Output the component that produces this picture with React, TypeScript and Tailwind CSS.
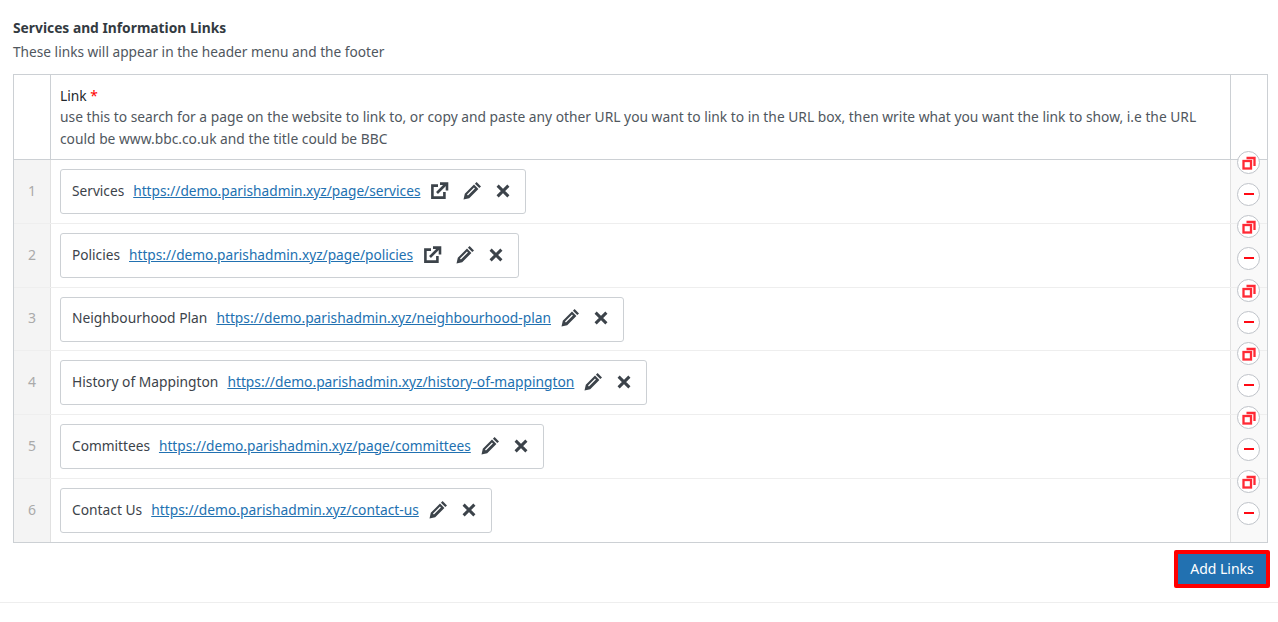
const links = [
  { title: "Services", url: "https://demo.parishadmin.xyz/page/services", external: true, height: "h-[64px]", size: "text-[13.7px]" },
  { title: "Policies", url: "https://demo.parishadmin.xyz/page/policies", external: true, height: "h-[64px]", size: "text-[13.7px]" },
  { title: "Neighbourhood Plan", url: "https://demo.parishadmin.xyz/neighbourhood-plan", external: false, height: "h-[63px]", size: "text-[13.8px]" },
  { title: "History of Mappington", url: "https://demo.parishadmin.xyz/history-of-mappington", external: false, height: "h-[64px]", size: "text-[13.8px]" },
  { title: "Committees", url: "https://demo.parishadmin.xyz/page/committees", external: false, height: "h-[64px]", size: "text-[13.7px]" },
  { title: "Contact Us", url: "https://demo.parishadmin.xyz/contact-us", external: false, height: "h-[63px]", size: "text-[13.8px]" },
];

function ExternalIcon() {
  return (
    <svg className="mr-[2px] h-[20px] w-[20px] shrink-0" viewBox="0 0 20 20" fill="none" stroke="#3c434a" strokeWidth="2.6">
      <path d="M9 4.6H3.4v12h12V11" />
      <path d="M8 12l8.5-8.5" />
      <path d="M11 2.6h7v7" />
    </svg>
  );
}

function PencilIcon() {
  return (
    <svg className="h-[20px] w-[20px] shrink-0" viewBox="0 0 20 20" fill="#3c434a">
      <path d="M14.6 1l4.4 4.4-1.7 1.7-4.4-4.4z" />
      <path fillRule="evenodd" d="M12 3.6l4.4 4.4-9.2 9.2-5.7 1.3 1.3-5.7zM12 6.6l-7 7 .9.9 7-7z" />
    </svg>
  );
}

function CloseIcon() {
  return (
    <svg className="h-[20px] w-[20px] shrink-0" viewBox="0 0 20 20" fill="none" stroke="#3c434a" strokeWidth="3">
      <path d="M4.6 4.6l10.8 10.8M15.4 4.6L4.6 15.4" />
    </svg>
  );
}

function CopyButton() {
  return (
    <span className="flex h-[23px] w-[23px] items-center justify-center rounded-full border border-[#bfc3c9] bg-white">
      <svg className="h-[14px] w-[14px]" viewBox="0 0 14 14" fill="none" stroke="#ff2a35" strokeWidth="2.3">
        <rect x="1.5" y="5" width="7.5" height="7.5" />
        <path d="M4.5 2h8v8" />
      </svg>
    </span>
  );
}

function MinusButton() {
  return (
    <span className="flex h-[23px] w-[23px] items-center justify-center rounded-full border border-[#bfc3c9] bg-white">
      <span className="block h-[2px] w-[10px] bg-[#ff0a14]" />
    </span>
  );
}

function LinkRow({ index, title, url, external, height, size, last }: { index: number; title: string; url: string; external: boolean; height: string; size: string; last: boolean }) {
  return (
    <div className={`flex ${height} ${last ? "" : "border-b border-[#eeeeee]"}`}>
      <div className="flex w-[37px] shrink-0 items-center justify-center border-r border-[#e1e1e1] bg-[#f4f4f4] pb-[2px] text-[14px] text-[#aaaaaa]">
        {index}
      </div>
      <div className="flex min-w-0 flex-1 items-center px-[9px]">
        <div className={`flex h-[45px] items-center rounded-[3px] border border-[#ccd0d4] bg-white pb-[2px] pl-[11px] pr-[12px] ${size}`}>
          <span className="text-[#3c434a]">{title}</span>
          <a href="#" className="ml-[9px] text-[#2271b1] underline">{url}</a>
          <span className="ml-[9px] flex items-center gap-[11px]">
            {external && <ExternalIcon />}
            <PencilIcon />
            <CloseIcon />
          </span>
        </div>
      </div>
      <div className="relative w-[37px] shrink-0 border-l border-[#e1e1e1] bg-[#f9f9f9]">
        <div className="absolute left-[6px] top-[-9px] flex flex-col gap-[8.5px]">
          <CopyButton />
          <MinusButton />
        </div>
      </div>
    </div>
  );
}

export default function App() {
  return (
    <div className="min-h-[622px] bg-white font-['Noto_Sans',sans-serif] text-[13.8px] leading-[22px] text-[#50575e]">
      <div className="px-[13px] pt-[17px]">
        <h2 className="font-bold text-[#333a41]">Services and Information Links</h2>
        <p className="mt-[2px] text-[13.7px]">These links will appear in the header menu and the footer</p>

        <div className="mr-[-3px] mt-[11px] border border-[#ccd0d4]">
          <div className="flex h-[85px] border-b border-[#ccd0d4]">
            <div className="w-[37px] shrink-0 border-r border-[#ccd0d4]" />
            <div className="min-w-0 flex-1 px-[9px] pt-[10px]">
              <div className="leading-[21px] text-[#23282d]">
                Link <span className="text-[#ff0000]">*</span>
              </div>
              <p>
                use this to search for a page on the website to link to, or copy and paste any other URL you want to link to in the URL box, then write what you want the link to show, i.e the URL could be www.bbc.co.uk and the title could be BBC
              </p>
            </div>
            <div className="w-[37px] shrink-0 border-l border-[#ccd0d4]" />
          </div>
          {links.map((link, i) => (
            <LinkRow key={link.url} index={i + 1} title={link.title} url={link.url} external={link.external} height={link.height} size={link.size} last={i === links.length - 1} />
          ))}
        </div>

        <div className="mr-[-5px] mt-[7px] flex justify-end">
          <button className="h-[38px] w-[96px] rounded-[2px] border-[4px] border-[#ff0000] bg-[#2271b1] text-[14px] text-white">
            Add Links
          </button>
        </div>
      </div>
      <div className="mt-[14px] border-t border-[#eeeeee]" />
    </div>
  );
}
